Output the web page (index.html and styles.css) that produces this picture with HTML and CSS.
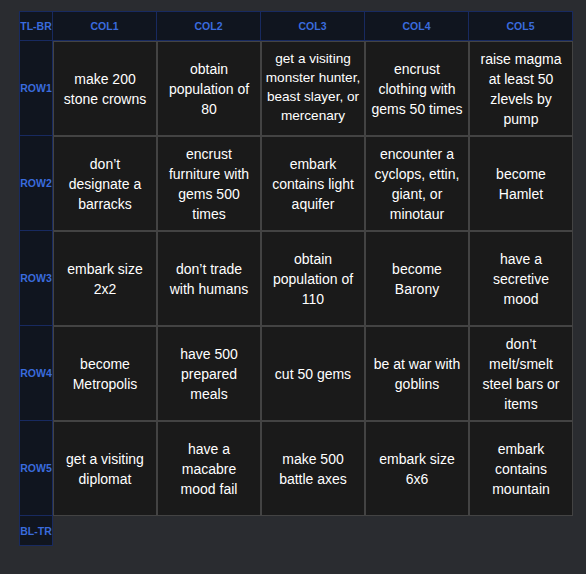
FILE: index.html
```html
<!DOCTYPE html>
<html>
<head>
<meta charset="utf-8">
<link rel="stylesheet" href="styles.css">
</head>
<body>
<div class="board">
  <div class="lab corner">TL-BR</div>
  <div class="lab colh">COL1</div>
  <div class="lab colh">COL2</div>
  <div class="lab colh">COL3</div>
  <div class="lab colh">COL4</div>
  <div class="lab colh">COL5</div>

  <div class="lab rowh">ROW1</div>
  <div class="cell">make 200 stone crowns</div>
  <div class="cell">obtain population of 80</div>
  <div class="cell small">get a visiting monster hunter, beast slayer, or mercenary</div>
  <div class="cell">encrust clothing with gems 50 times</div>
  <div class="cell">raise magma at least 50 zlevels by pump</div>

  <div class="lab rowh">ROW2</div>
  <div class="cell">don’t designate a barracks</div>
  <div class="cell">encrust furniture with gems 500 times</div>
  <div class="cell">embark contains light aquifer</div>
  <div class="cell">encounter a cyclops, ettin, giant, or minotaur</div>
  <div class="cell">become Hamlet</div>

  <div class="lab rowh">ROW3</div>
  <div class="cell">embark size 2x2</div>
  <div class="cell">don’t trade with humans</div>
  <div class="cell">obtain population of 110</div>
  <div class="cell">become Barony</div>
  <div class="cell">have a secretive mood</div>

  <div class="lab rowh">ROW4</div>
  <div class="cell">become Metropolis</div>
  <div class="cell">have 500 prepared meals</div>
  <div class="cell">cut 50 gems</div>
  <div class="cell">be at war with goblins</div>
  <div class="cell">don’t melt/smelt steel bars or items</div>

  <div class="lab rowh">ROW5</div>
  <div class="cell">get a visiting diplomat</div>
  <div class="cell">have a macabre mood fail</div>
  <div class="cell">make 500 battle axes</div>
  <div class="cell">embark size 6x6</div>
  <div class="cell">embark contains mountain</div>

  <div class="lab rowh">BL-TR</div>
</div>
</body>
</html>
```

FILE: styles.css
```css
html, body {
  margin: 0;
  padding: 0;
  background: #2a2c30;
}
body {
  padding: 11px 0 0 19px;
  font-family: "Liberation Sans", Arial, sans-serif;
}
.board {
  display: grid;
  grid-template-columns: 34px repeat(5, 104px);
  grid-template-rows: 30px repeat(5, 95px) 30px;
}
.lab {
  box-sizing: border-box;
  background: #10151f;
  border: 1px solid #182a60;
  color: #3a6bdc;
  font-weight: bold;
  font-size: 10.5px;
  display: flex;
  align-items: center;
  justify-content: center;
  white-space: nowrap;
  overflow: hidden;
}
.colh {
  border-left: none;
}
.rowh {
  border-top: none;
}
.cell {
  box-sizing: border-box;
  background: #1a1a1a;
  border: 1px solid #434343;
  color: #ffffff;
  font-size: 14px;
  line-height: 20px;
  padding: 0 5px;
  display: flex;
  align-items: center;
  justify-content: center;
  text-align: center;
}
.small {
  font-size: 13.6px;
  line-height: 19px;
  padding: 0 3px 3px;
}
```
